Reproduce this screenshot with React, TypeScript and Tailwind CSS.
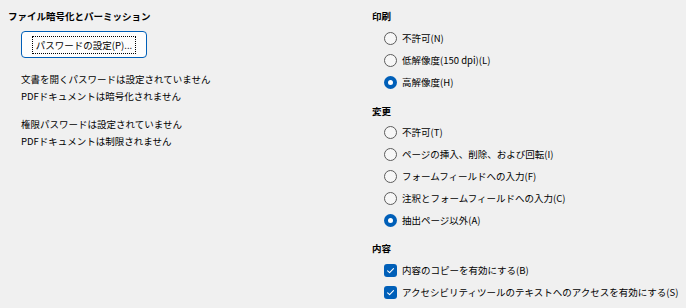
import React from 'react';

const Radio: React.FC<{ label: string; checked?: boolean }> = ({ label, checked }) => (
  <div className="flex items-center h-[22px] pl-[12px] gap-[5px]">
    {checked ? (
      <span className="w-[13px] h-[13px] shrink-0 rounded-full bg-[#005fb8] flex items-center justify-center">
        <span className="w-[5px] h-[5px] rounded-full bg-white" />
      </span>
    ) : (
      <span className="w-[13px] h-[13px] shrink-0 rounded-full border border-[#5c5c5c] bg-[#f7f7f7]" />
    )}
    <span className="whitespace-nowrap">{label}</span>
  </div>
);

const Check: React.FC<{ label: string }> = ({ label }) => (
  <div className="flex items-center h-[22px] pl-[12px] gap-[5px]">
    <span className="w-[13px] h-[13px] shrink-0 rounded-[3px] bg-[#005fb8] flex items-center justify-center">
      <svg width="9" height="9" viewBox="0 0 9 9" fill="none">
        <path d="M1.6 4.8 L3.6 6.6 L7.5 2.6" stroke="white" strokeWidth="1.1" strokeLinecap="round" strokeLinejoin="round" />
      </svg>
    </span>
    <span className="whitespace-nowrap">{label}</span>
  </div>
);

const Heading: React.FC<{ children: React.ReactNode; className?: string }> = ({ children, className }) => (
  <div className={`h-[16px] leading-[16px] font-bold whitespace-nowrap ${className ?? ''}`}>{children}</div>
);

const App: React.FC = () => {
  return (
    <div className="w-[686px] h-[308px] bg-[#f0f0f0] flex text-[9.5px] text-black font-['Noto_Sans_CJK_JP','Noto_Sans',sans-serif] leading-[17px]">
      <div className="w-[364px] shrink-0 pl-[8px] pt-[8px]">
        <Heading>ファイル暗号化とパーミッション</Heading>
        <button className="mt-[7px] ml-[13px] w-[126px] h-[27px] bg-[#fdfdfd] border border-[#005fb8] rounded-[4px] flex items-center justify-center">
          <span className="border border-dotted border-black px-[3px] leading-[16px] whitespace-nowrap">パスワードの設定(P)...</span>
        </button>
        <div className="ml-[13px] mt-[13px]">
          <div>文書を開くパスワードは設定されていません</div>
          <div>PDFドキュメントは暗号化されません</div>
        </div>
        <div className="ml-[13px] mt-[11px]">
          <div>権限パスワードは設定されていません</div>
          <div>PDFドキュメントは制限されません</div>
        </div>
      </div>
      <div className="flex-1 pl-[8px] pt-[8px]">
        <Heading>印刷</Heading>
        <div className="mt-[3px]">
          <Radio label="不許可(N)" />
          <Radio label="低解像度(150 dpi)(L)" />
          <Radio label="高解像度(H)" checked />
        </div>
        <Heading className="mt-[10px]">変更</Heading>
        <div className="mt-[2px]">
          <Radio label="不許可(T)" />
          <Radio label="ページの挿入、削除、および回転(I)" />
          <Radio label="フォームフィールドへの入力(F)" />
          <Radio label="注釈とフォームフィールドへの入力(C)" />
          <Radio label="抽出ページ以外(A)" checked />
        </div>
        <Heading className="mt-[9px]">内容</Heading>
        <div className="mt-[3px]">
          <Check label="内容のコピーを有効にする(B)" />
          <Check label="アクセシビリティツールのテキストへのアクセスを有効にする(S)" />
        </div>
      </div>
    </div>
  );
};

export default App;
